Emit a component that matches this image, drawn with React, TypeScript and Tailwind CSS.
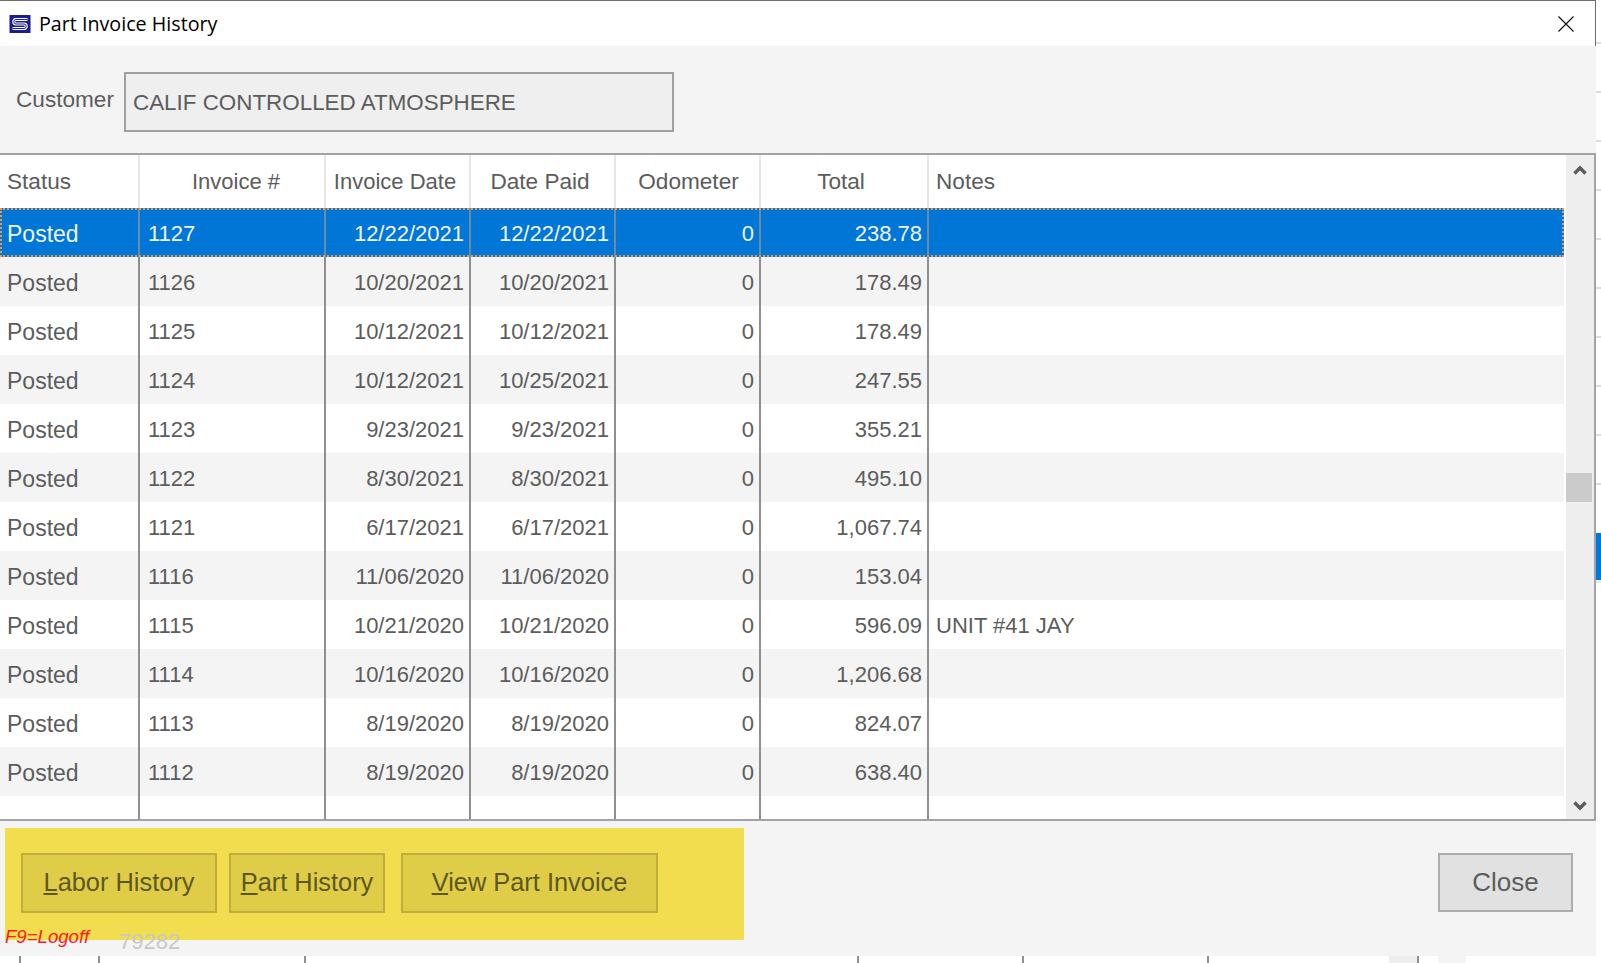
const rows = [
  ["1127", "12/22/2021", "12/22/2021", "238.78", ""],
  ["1126", "10/20/2021", "10/20/2021", "178.49", ""],
  ["1125", "10/12/2021", "10/12/2021", "178.49", ""],
  ["1124", "10/12/2021", "10/25/2021", "247.55", ""],
  ["1123", "9/23/2021", "9/23/2021", "355.21", ""],
  ["1122", "8/30/2021", "8/30/2021", "495.10", ""],
  ["1121", "6/17/2021", "6/17/2021", "1,067.74", ""],
  ["1116", "11/06/2020", "11/06/2020", "153.04", ""],
  ["1115", "10/21/2020", "10/21/2020", "596.09", "UNIT #41 JAY"],
  ["1114", "10/16/2020", "10/16/2020", "1,206.68", ""],
  ["1113", "8/19/2020", "8/19/2020", "824.07", ""],
  ["1112", "8/19/2020", "8/19/2020", "638.40", ""],
]

const colGrid = "grid grid-cols-[140px_186px_145px_145px_145px_168px_1fr]"

function AppIcon() {
  return (
    <svg width="22" height="18" viewBox="0 0 21 18" className="shrink-0">
      <rect width="21" height="18" fill="#1c1c8c" />
      <path
        d="M18 4.5H6.5a2.2 2.2 0 0 0 0 4.5h8a2.2 2.2 0 0 1 0 4.5H3"
        fill="none"
        stroke="#ffffff"
        strokeWidth="3"
      />
      <path
        d="M18 4.5H6.5a2.2 2.2 0 0 0 0 4.5h8a2.2 2.2 0 0 1 0 4.5H3"
        fill="none"
        stroke="#1c1c8c"
        strokeWidth="1"
      />
    </svg>
  )
}

function Chevron({ down }: { down?: boolean }) {
  return (
    <svg width="14" height="11" viewBox="0 0 14 11">
      <polyline
        points={down ? "1.5,2.5 7,8 12.5,2.5" : "1.5,8.5 7,3 12.5,8.5"}
        fill="none"
        stroke="#5c5c5c"
        strokeWidth="3.5"
      />
    </svg>
  )
}

function HeaderRow() {
  const cell = "border-r-2 border-[#e6e6e6] flex items-center"
  return (
    <div className={`${colGrid} h-[53px] bg-white text-[22.6px] text-[#5c5c5c]`}>
      <div className={`${cell} pl-[7px]`}>Status</div>
      <div className={`${cell} justify-center pl-[8px] text-[22px]`}>Invoice #</div>
      <div className={`${cell} justify-center pr-[5px] text-[22px]`}>Invoice Date</div>
      <div className={`${cell} justify-center pr-[5px]`}>Date Paid</div>
      <div className={`${cell} justify-center pl-[2px]`}>Odometer</div>
      <div className={`${cell} justify-center pr-[6px]`}>Total</div>
      <div className="flex items-center pl-[7px]">Notes</div>
    </div>
  )
}

function Row({ row, index }: { row: string[]; index: number }) {
  const selected = index === 0
  const rowStyle = selected
    ? "bg-[#0076d6] text-[#eef5fc] outline-2 outline-dotted -outline-offset-2 outline-[#e89a50]"
    : index % 2 === 1
      ? "bg-[#f4f4f4] text-[#5c5c5c]"
      : "bg-white text-[#5c5c5c]"
  const line = selected ? "border-[#6f8aa3]" : "border-[#8f8f8f]"
  const cell = `border-r-2 ${line} flex items-center`
  return (
    <div className={`${colGrid} h-[49px] text-[22px] ${rowStyle}`}>
      <div className={`${cell} pl-[7px] pt-[3px] text-[23px]`}>Posted</div>
      <div className={`${cell} pl-[8px] pt-[2px]`}>{row[0]}</div>
      <div className={`${cell} justify-end pr-[5px] pt-[2px]`}>{row[1]}</div>
      <div className={`${cell} justify-end pr-[5px] pt-[2px]`}>{row[2]}</div>
      <div className={`${cell} justify-end pr-[5px] pt-[2px]`}>0</div>
      <div className={`${cell} justify-end pr-[5px] pt-[2px]`}>{row[3]}</div>
      <div className="flex items-center pl-[7px] pt-[2px]">{row[4]}</div>
    </div>
  )
}

function Grid() {
  return (
    <div className="mt-[21px] h-[668px] flex border-t-2 border-b-2 border-r-2 border-[#a0a4a8] bg-white">
      <div className="w-[1564px] flex flex-col">
        <HeaderRow />
        {rows.map((row, i) => (
          <Row key={row[0]} row={row} index={i} />
        ))}
        <div className={`${colGrid} flex-1 bg-white`}>
          <div className="border-r-2 border-[#8f8f8f]" />
          <div className="border-r-2 border-[#8f8f8f]" />
          <div className="border-r-2 border-[#8f8f8f]" />
          <div className="border-r-2 border-[#8f8f8f]" />
          <div className="border-r-2 border-[#8f8f8f]" />
          <div className="border-r-2 border-[#8f8f8f]" />
          <div />
        </div>
      </div>
      <div className="ml-[2px] flex-1 bg-[#eeeeee] flex flex-col items-center">
        <div className="h-[31px] flex items-center justify-center">
          <Chevron />
        </div>
        <div className="mt-[287px] w-[26px] h-[29px] self-start bg-[#cbcbcb]" />
        <div className="flex-1" />
        <div className="h-[28px] flex items-center justify-center">
          <Chevron down />
        </div>
      </div>
    </div>
  )
}

function Footer() {
  const button =
    "h-[60px] pb-[2px] border-2 border-[#bfae3e] bg-[#dfcd48] text-[25.4px] text-[#5e5722] flex items-center justify-center"
  return (
    <div className="relative flex-1 flex items-start">
      <div className="ml-[5px] mt-[7px] w-[739px] h-[112px] bg-[#f1dd4e] pl-[16px] pt-[25px] flex">
        <button className={`${button} w-[196px]`}>
          <span>
            <u>L</u>abor History
          </span>
        </button>
        <button className={`${button} ml-[12px] w-[156px]`}>
          <span>
            <u>P</u>art History
          </span>
        </button>
        <button className={`${button} ml-[16px] w-[257px]`}>
          <span>
            <u>V</u>iew Part Invoice
          </span>
        </button>
      </div>
      <button className="ml-auto mr-[23px] mt-[32px] w-[135px] h-[59px] border-2 border-[#adadad] bg-[#e1e1e1] text-[26px] text-[#5c5c5c]">
        Close
      </button>
      <span className="absolute left-[5px] top-[104px] text-[18.6px] leading-[24px] italic text-[#ff1a1a]">
        F9=Logoff
      </span>
      <span className="absolute left-[119px] top-[108px] text-[22px] leading-[26px] text-[#c8c8c8]">
        79282
      </span>
    </div>
  )
}

function BottomStrip() {
  const tick = "w-[2px] bg-[#8f8f8f]"
  return (
    <div className="flex-1 flex bg-white">
      <div className={`${tick} ml-[19px]`} />
      <div className={`${tick} ml-[77px]`} />
      <div className={`${tick} ml-[204px]`} />
      <div className={`${tick} ml-[551px]`} />
      <div className={`${tick} ml-[163px]`} />
      <div className={`${tick} ml-[183px]`} />
      <div className="ml-[180px] w-[28px] bg-[#eeeeee]" />
      <div className={tick} />
      <div className="ml-[19px] w-[28px] bg-[#f4f4f4]" />
    </div>
  )
}

function RightStrip() {
  return (
    <div className="flex-1 flex flex-col bg-white pt-[42px]">
      <div className="flex flex-col gap-[47px]">
        {[0, 1, 2, 3, 4, 5, 6, 7, 8, 9].map((n) => (
          <div key={n} className="h-[2px] bg-[#dddddd]" />
        ))}
      </div>
      <div className="mt-[48px] h-[47px] bg-[#0078d7]" />
      <div className="mt-[1px] h-[2px] bg-[#e8e8e8]" />
    </div>
  )
}

export default function App() {
  return (
    <div className="w-[1601px] h-[963px] flex overflow-hidden bg-white font-['Liberation_Sans',sans-serif]">
      <div className="w-[1596px] flex flex-col">
        <div className="h-[956px] flex flex-col bg-[#f4f4f4]">
          <div className="h-[46px] shrink-0 flex items-center bg-white border-t border-r border-[#6e6e6e] pl-[9px] pr-[21px]">
            <AppIcon />
            <span className="ml-[8px] pt-[1px] font-['Open_Sans',sans-serif] text-[19.7px] text-black">
              Part Invoice History
            </span>
            <svg width="16" height="16" viewBox="0 0 16 16" className="ml-auto">
              <path d="M0.5 0.5L15.5 15.5M15.5 0.5L0.5 15.5" stroke="#111111" strokeWidth="1.2" />
            </svg>
          </div>
          <div className="h-[60px] mt-[26px] shrink-0 flex items-center">
            <label className="ml-[16px] w-[109px] text-[22.6px] text-[#5c5c5c] -mt-[4px]">Customer</label>
            <div className="-ml-[1px] w-[550px] h-[60px] border-2 border-[#a0a0a0] bg-[#efefef] flex items-center pl-[7px] pt-[2px] text-[22.4px] text-[#5c5c5c]">
              CALIF CONTROLLED ATMOSPHERE
            </div>
          </div>
          <Grid />
          <Footer />
        </div>
        <BottomStrip />
      </div>
      <RightStrip />
    </div>
  )
}
